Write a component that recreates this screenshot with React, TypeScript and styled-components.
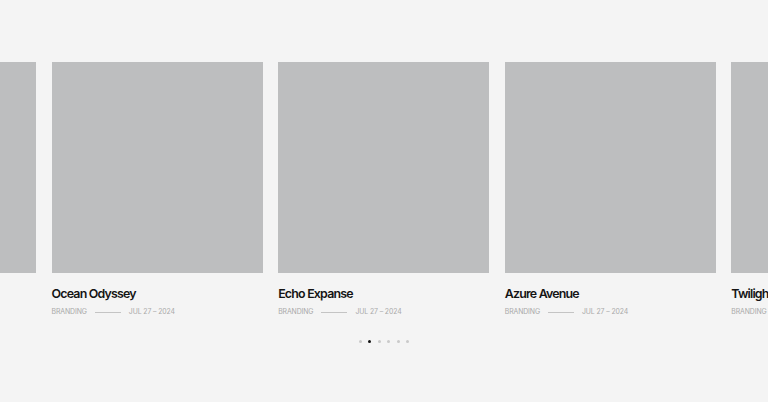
import styled, { createGlobalStyle } from "styled-components";

const GlobalStyle = createGlobalStyle`
  html, body {
    margin: 0;
    padding: 0;
    background: #f4f4f4;
    font-family: Inter, "Liberation Sans", sans-serif;
  }
`;

const projects = [
  { title: "Lunar Drift", tag: "Branding", date: "Jul 27 – 2024" },
  { title: "Ocean Odyssey", tag: "Branding", date: "Jul 27 – 2024" },
  { title: "Echo Expanse", tag: "Branding", date: "Jul 27 – 2024" },
  { title: "Azure Avenue", tag: "Branding", date: "Jul 27 – 2024" },
  { title: "Twilight Tides", tag: "Branding", date: "Jul 27 – 2024" },
];

const Section = styled.section`
  width: 768px;
  height: 402px;
  overflow: hidden;
  padding-top: 62px;
  box-sizing: border-box;
`;

const Track = styled.div`
  display: flex;
  gap: 15.4px;
  margin-left: -175px;
`;

const Card = styled.article`
  flex: 0 0 211.2px;
  display: flex;
  flex-direction: column;
`;

const Thumb = styled.div`
  height: 211px;
  background: #bdbebf;
`;

const Title = styled.h3`
  margin: 13px 0 0;
  font-size: 12.4px;
  line-height: 16px;
  font-weight: 600;
  letter-spacing: -0.8px;
  color: #141414;
  white-space: nowrap;
`;

const Meta = styled.div`
  display: flex;
  align-items: center;
  margin-top: 5px;
  font-size: 6.9px;
  line-height: 10px;
  letter-spacing: -0.1px;
  color: #a9a9a9;
  text-transform: uppercase;
  white-space: nowrap;
`;

const Rule = styled.span`
  width: 26px;
  height: 1px;
  background: #c4c4c4;
  margin: 0 8px;
`;

const Dots = styled.div`
  display: flex;
  justify-content: center;
  gap: 6.4px;
  margin-top: 23px;
`;

const Dot = styled.span<{ $active?: boolean }>`
  width: 3px;
  height: 3px;
  border-radius: 50%;
  background: ${(p) => (p.$active ? "#111" : "#cacaca")};
`;

export default function App() {
  return (
    <>
      <GlobalStyle />
      <Section>
        <Track>
          {projects.map((p) => (
            <Card key={p.title}>
              <Thumb />
              <Title>{p.title}</Title>
              <Meta>
                {p.tag}
                <Rule />
                {p.date}
              </Meta>
            </Card>
          ))}
        </Track>
        <Dots>
          {[0, 1, 2, 3, 4, 5].map((i) => (
            <Dot key={i} $active={i === 1} />
          ))}
        </Dots>
      </Section>
    </>
  );
}
